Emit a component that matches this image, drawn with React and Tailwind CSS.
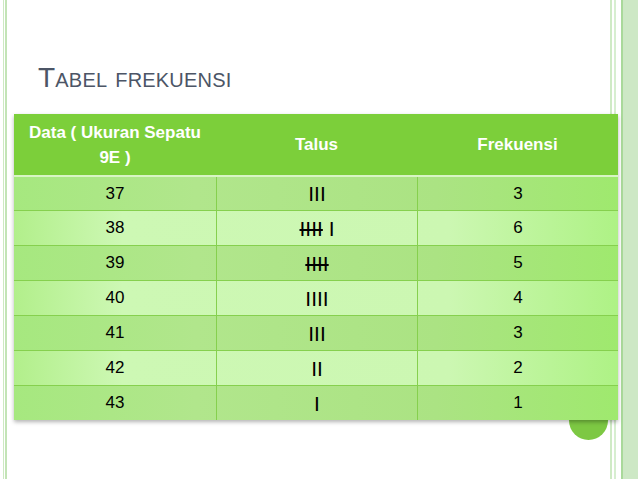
import React from "react";

const rows = [
  { d: "37", t: <span>III</span>, f: "3" },
  { d: "38", t: <span><span className="line-through decoration-[1.5px]">IIII</span> I</span>, f: "6" },
  { d: "39", t: <span className="line-through decoration-[1.5px]">IIII</span>, f: "5" },
  { d: "40", t: <span>IIII</span>, f: "4" },
  { d: "41", t: <span>III</span>, f: "3" },
  { d: "42", t: <span>II</span>, f: "2" },
  { d: "43", t: <span>I</span>, f: "1" },
];

const lightBg = "bg-[linear-gradient(90deg,#b2ef8b_0%,#cdf8b4_18%,#ccf7b2_72%,#aef285_100%)]";
const darkBg = "bg-[linear-gradient(90deg,#a6e87f_0%,#b1e68c_30%,#abe383_70%,#9fe96e_100%)]";

export default function App() {
  return (
    <div className="w-[638px] h-[479px] overflow-hidden font-['Liberation_Sans',Arial,sans-serif] bg-[linear-gradient(90deg,#ffffff_0px,#ffffff_3px,#cde9c2_3px,#cde9c2_4px,#ffffff_4px,#ffffff_5px,#c3e4b6_5px,#c3e4b6_7px,#ffffff_7px,#ffffff_610px,#cfeac5_610px,#cfeac5_612px,#ffffff_612px,#ffffff_614px,#d7eed0_614px,#d7eed0_616px,#ffffff_616px,#ffffff_621px,#a9d99a_621px,#a9d99a_623px,#cde8c5_623px)]">
      <div className="pt-[62px] pl-[38px] text-[28px] leading-[32px] text-[#4c5566] [font-variant:small-caps] tracking-[0.2px]">
        Tabel frekuensi
      </div>

      <div className="ml-[14px] mt-[20px] w-[604px] flex flex-col">
        <div className="relative z-10 shadow-[0_2px_4px_rgba(0,0,0,0.3)]">
          <div className="grid grid-cols-[202px_201px_201px] h-[61px] bg-[#7ccf3a] text-white font-bold text-[17px] leading-[25px] text-center">
            <div className="flex items-center justify-center px-[11px]">Data ( Ukuran Sepatu 9E )</div>
            <div className="flex items-center justify-center">Talus</div>
            <div className="flex items-center justify-center">Frekuensi</div>
          </div>
          <div className="h-[2px] bg-[#d8f5c4]" />
          {rows.map((r, i) => {
            const light = i % 2 === 1;
            return (
              <div
                key={r.d}
                className={`grid grid-cols-[202px_201px_201px] text-[17px] text-black text-center ${i === 0 ? "h-[33px]" : "h-[35px] border-t border-[#86d04e]"} ${light ? lightBg : darkBg}`}
              >
                <div className="flex items-center justify-center">{r.d}</div>
                <div className="flex items-center justify-center border-l border-[#86d04e] text-[21px] leading-none">{r.t}</div>
                <div className="flex items-center justify-center border-l border-[#86d04e]">{r.f}</div>
              </div>
            );
          })}
        </div>
        <div className="flex justify-end pr-[10px] -mt-[19px]">
          <div className="w-[39px] h-[39px] rounded-full bg-[#7dc843]" />
        </div>
      </div>
    </div>
  );
}
